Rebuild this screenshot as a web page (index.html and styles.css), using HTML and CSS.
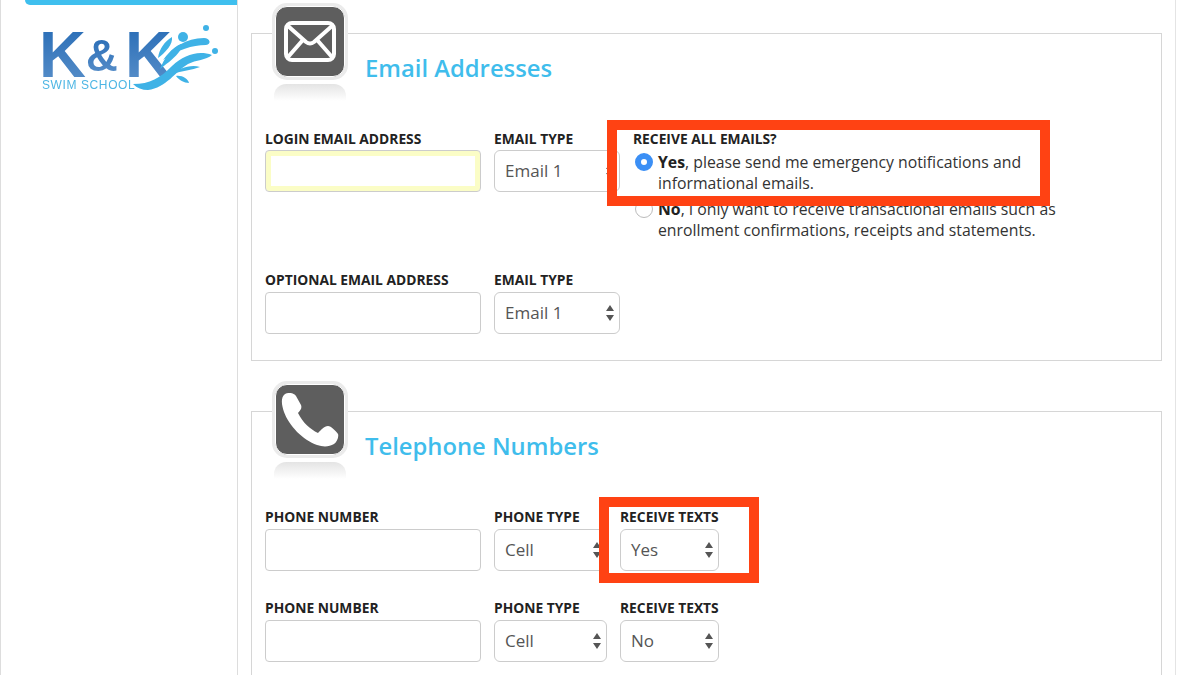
FILE: index.html
```html
<!DOCTYPE html>
<html>
<head lang="en">
  <meta charset="UTF-8">
  <title>Contact Information</title>
  <link rel="stylesheet" href="styles.css">
</head>
<body>

<div class="page">
  <!-- left column with logo -->
  <div class="sidebar">
    <div class="sidebar-bar"></div>
    <svg class="logo" width="180" height="84" viewBox="40 8 180 84">
      <defs>
        <linearGradient id="kfill" x1="0" y1="0" x2="0" y2="1">
          <stop offset="0" stop-color="#2369b4"/>
          <stop offset="1" stop-color="#5d92cb"/>
        </linearGradient>
      </defs>
      <text class="logo-k" x="39" y="77" fill="url(#kfill)">K</text>
      <text class="logo-amp" x="86" y="71" fill="url(#kfill)">&amp;</text>
      <text class="logo-k" x="125" y="77" fill="url(#kfill)">K</text>
      <text class="logo-sub" x="42" y="89">SWIM SCHOOL</text>
      <g fill="#3fb2e6">
        <path d="M133 84 C150 84 160 78 172 66 C184 55 198 50 212 55 C206 60 196 60 188 64 C176 71 166 88 148 90 C142 90 137 88 133 84Z"/>
        <path d="M163 60 C172 48 186 38 204 38 C210 38 212 44 206 45 C192 45 178 50 163 60Z"/>
        <path d="M158 58 C159 49 165 41 172 37 C173 44 166 52 158 58Z"/>
        <path d="M160 69 C164 58 172 47 181 44 C184 50 172 60 160 69Z"/>
        <path d="M172 74 C178 69 190 64 200 67 C192 70 182 71 172 74Z"/>
        <path d="M176 76 C182 75 188 79 189 83 C184 83 179 80 176 76Z"/>
        <circle cx="183" cy="37" r="5"/>
        <circle cx="206" cy="28" r="3"/>
        <circle cx="215" cy="51" r="3"/>
      </g>
    </svg>
  </div>

  <div class="main">
    <!-- email block -->
    <div class="section">
      <div class="section-head">
        <div class="icon-wrap">
          <div class="icon-box">
            <svg width="52" height="41" viewBox="0 0 52 41">
              <rect x="2" y="2" width="48" height="37" rx="6" fill="none" stroke="#fff" stroke-width="4"/>
              <path d="M4 5 L22 21 Q26 24 30 21 L48 5 M4 36 L18 20 M48 36 L34 20" fill="none" stroke="#fff" stroke-width="4"/>
            </svg>
          </div>
          <div class="icon-shine"></div>
        </div>
        <h2 class="section-title">Email Addresses</h2>
      </div>

      <div class="row row-email">
        <div class="field">
          <label class="field-label field-label-first">Login Email Address</label>
          <input class="text-input text-input-auto" type="text">
        </div>
        <div class="field">
          <label class="field-label field-label-first">Email Type</label>
          <div class="select-wrap type-wide">
            <span class="select-value">Email 1</span>
            <svg class="arrows" width="10" height="16" viewBox="0 0 10 16"><path d="M5 0 L9 6 H1Z M1 10 H9 L5 16Z" fill="#555"/></svg>
          </div>
        </div>
        <div class="field">
          <label class="field-label field-label-first">Receive All Emails?</label>
          <div class="radio-line"><span class="radio radio-on"></span><p><b>Yes</b>, please send me emergency notifications and<br>informational emails.</p></div>
          <div class="radio-line radio-line-2"><span class="radio"></span><p><b>No</b>, I only want to receive transactional emails such as<br>enrollment confirmations, receipts and statements.</p></div>
        </div>
      </div>

      <div class="row">
        <div class="field">
          <label class="field-label">Optional Email Address</label>
          <input class="text-input" type="text">
        </div>
        <div class="field">
          <label class="field-label">Email Type</label>
          <div class="select-wrap type-wide">
            <span class="select-value">Email 1</span>
            <svg class="arrows" width="10" height="16" viewBox="0 0 10 16"><path d="M5 0 L9 6 H1Z M1 10 H9 L5 16Z" fill="#555"/></svg>
          </div>
        </div>
      </div>
    </div>

    <!-- phone block -->
    <div class="section">
      <div class="section-head">
        <div class="icon-wrap">
          <div class="icon-box">
            <svg width="58" height="54" viewBox="0 0 58 54">
              <path d="M4 1 C8 -1 13 0 15 3 L20 12 C21 15 20 17 17 20 C22 30 29 36 37 40 C40 37 43 33 47 33 C50 33 55 38 57 41 C58 44 56 49 53 51 C48 54 42 54 36 52 C22 47 8 33 3 19 C1 13 -1 5 4 1Z" fill="#fff"/>
            </svg>
          </div>
          <div class="icon-shine"></div>
        </div>
        <h2 class="section-title">Telephone Numbers</h2>
      </div>

      <div class="row row-phone">
        <div class="field">
          <label class="field-label">Phone Number</label>
          <input class="text-input" type="text">
        </div>
        <div class="field">
          <label class="field-label">Phone Type</label>
          <div class="select-wrap type-mid">
            <span class="select-value">Cell</span>
            <svg class="arrows" width="10" height="16" viewBox="0 0 10 16"><path d="M5 0 L9 6 H1Z M1 10 H9 L5 16Z" fill="#555"/></svg>
          </div>
        </div>
        <div class="field">
          <label class="field-label">Receive Texts</label>
          <div class="select-wrap type-small">
            <span class="select-value">Yes</span>
            <svg class="arrows" width="10" height="16" viewBox="0 0 10 16"><path d="M5 0 L9 6 H1Z M1 10 H9 L5 16Z" fill="#555"/></svg>
          </div>
        </div>
      </div>

      <div class="row row-phone">
        <div class="field">
          <label class="field-label">Phone Number</label>
          <input class="text-input" type="text">
        </div>
        <div class="field">
          <label class="field-label">Phone Type</label>
          <div class="select-wrap type-mid">
            <span class="select-value">Cell</span>
            <svg class="arrows" width="10" height="16" viewBox="0 0 10 16"><path d="M5 0 L9 6 H1Z M1 10 H9 L5 16Z" fill="#555"/></svg>
          </div>
        </div>
        <div class="field">
          <label class="field-label">Receive Texts</label>
          <div class="select-wrap type-small">
            <span class="select-value">No</span>
            <svg class="arrows" width="10" height="16" viewBox="0 0 10 16"><path d="M5 0 L9 6 H1Z M1 10 H9 L5 16Z" fill="#555"/></svg>
          </div>
        </div>
      </div>
    </div>
  </div>

  <!-- red callouts drawn on top of the form -->
  <div class="callout callout-email"></div>
  <div class="callout callout-texts"></div>
</div>

</body>
</html>
```

FILE: styles.css
```css
* {
  margin: 0;
  padding: 0;
  box-sizing: border-box;
}

html, body {
  width: 100%;
  height: 100%;
  overflow: hidden;
  background: #fff;
}

body {
  font-family: "Open Sans", "Liberation Sans", sans-serif;
  color: #333;
}

.page {
  position: relative;
  display: flex;
  width: 1176px;
  height: 675px;
  overflow: hidden;
  border-left: 1px solid #ddd;
  border-right: 1px solid #e4e4e4;
}

/* sidebar */
.sidebar {
  flex: none;
  width: 237px;
  border-right: 1px solid #ddd;
  padding-left: 24px;
}

.sidebar-bar {
  height: 5px;
  background: #3fbfee;
  border-bottom-left-radius: 6px;
}

.logo {
  display: block;
  margin: 3px 0 0 15px;
  filter: blur(0.4px);
}

.logo-k {
  font-family: "Liberation Sans", sans-serif;
  font-weight: 700;
  font-size: 65px;
}

.logo-amp {
  font-family: "Liberation Sans", sans-serif;
  font-weight: 700;
  font-size: 44px;
}

.logo-sub {
  font-family: "Liberation Sans", sans-serif;
  font-size: 12px;
  letter-spacing: 0.6px;
  fill: #4db6e4;
}

/* main column */
.main {
  flex: 1;
  padding: 33px 13px 0 13px;
}

.section {
  border: 1px solid #d6d6d6;
  padding: 0 13px 26px;
  margin-bottom: 50px;
}

.section-head {
  display: flex;
  height: 94px;
  padding-left: 7px;
}

.icon-wrap {
  flex: none;
  width: 76px;
  margin-top: -31px;
}

.icon-box {
  display: flex;
  align-items: center;
  justify-content: center;
  width: 70px;
  height: 71px;
  margin: 3px;
  background: #5e5e5e;
  border: 1px solid #fff;
  border-radius: 12px;
  box-shadow: 0 0 0 3px #ebebeb;
}

.icon-shine {
  width: 72px;
  height: 17px;
  margin: 7px 0 0 2px;
  border-radius: 12px 12px 0 0;
  background: linear-gradient(#e4e4e4, #fff);
}

.section-title {
  margin: 18px 0 0 17px;
  font-size: 23.8px;
  line-height: 33px;
  font-weight: 600;
  color: #3fbdec;
}

.row {
  display: flex;
  gap: 13px;
}

.row-email {
  margin-bottom: 28px;
}

.row-phone {
  margin-bottom: 26px;
}

.field-label {
  display: block;
  height: 23px;
  font-size: 13.8px;
  line-height: 22px;
  font-weight: 700;
  text-transform: uppercase;
  color: #222;
}

.field-label-first {
  height: 22px;
}

.text-input {
  display: block;
  width: 216px;
  height: 42px;
  border: 1px solid #ccc;
  border-radius: 4px;
  background: #fff;
}

.text-input-auto {
  box-shadow: inset 0 0 0 5px #fbfdc6;
}

.select-wrap {
  position: relative;
  display: flex;
  align-items: center;
  height: 42px;
  padding: 0 0 2px 10px;
  border: 1px solid #ccc;
  border-radius: 6px;
  background: #fff;
}

.type-wide {
  width: 126px;
}

.type-mid {
  width: 113px;
}

.type-small {
  width: 99px;
}

.select-value {
  font-size: 17px;
  color: #555;
}

.arrows {
  position: absolute;
  top: 12px;
  right: 4px;
}

/* radio group */
.radio-line {
  display: flex;
  font-size: 15.8px;
  line-height: 21px;
  color: #333;
}

.radio-line:first-of-type {
  margin-top: 2px;
}

.radio-line-2 {
  margin-top: 5px;
}

.radio-line b {
  font-weight: 700;
  color: #222;
}

.radio {
  flex: none;
  width: 18px;
  height: 18px;
  margin: 1px 5px 0 2px;
  border: 1px solid #bbb;
  border-radius: 50%;
  background: #fff;
}

.radio-on {
  border: 6px solid #3b8ff5;
}

/* red callouts */
.callout {
  position: absolute;
  border: 10px solid #ff4213;
}

.callout-email {
  left: 606px;
  top: 120px;
  width: 443px;
  height: 86px;
}

.callout-texts {
  left: 598px;
  top: 497px;
  width: 160px;
  height: 86px;
}
```
